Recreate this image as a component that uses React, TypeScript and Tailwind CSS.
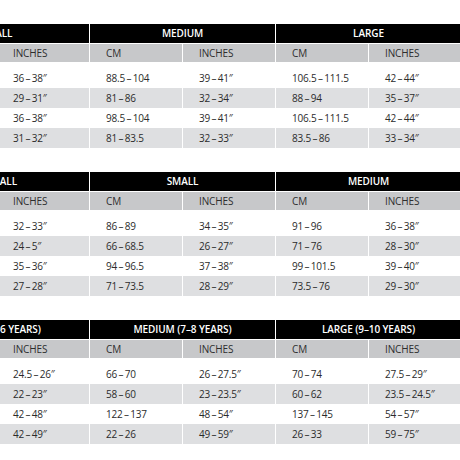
const font = { fontFamily: '"Open Sans", "Liberation Sans", sans-serif' };

type Table = {
  sizes: string[];
  rows: string[][];
};

// thin spaces around the dash, the print chart sets them tight
const d = (a: string, b: string, inch = false) =>
  `${a}\u2009–\u2009${b}${inch ? "″" : ""}`;

const tables: Table[] = [
  {
    sizes: ["SMALL", "MEDIUM", "LARGE"],
    rows: [
      [d("81", "86"), d("36", "38", true), d("88.5", "104"), d("39", "41", true), d("106.5", "111.5"), d("42", "44", true)],
      [d("74", "79"), d("29", "31", true), d("81", "86"), d("32", "34", true), d("88", "94"), d("35", "37", true)],
      [d("91.5", "96.5"), d("36", "38", true), d("98.5", "104"), d("39", "41", true), d("106.5", "111.5"), d("42", "44", true)],
      [d("79", "81"), d("31", "32", true), d("81", "83.5"), d("32", "33", true), d("83.5", "86"), d("33", "34", true)],
    ],
  },
  {
    sizes: ["X-SMALL", "SMALL", "MEDIUM"],
    rows: [
      [d("81", "84"), d("32", "33", true), d("86", "89"), d("34", "35", true), d("91", "96"), d("36", "38", true)],
      [d("61", "63.5"), d("24", "5", true), d("66", "68.5"), d("26", "27", true), d("71", "76"), d("28", "30", true)],
      [d("89", "91.5"), d("35", "36", true), d("94", "96.5"), d("37", "38", true), d("99", "101.5"), d("39", "40", true)],
      [d("68.5", "71"), d("27", "28", true), d("71", "73.5"), d("28", "29", true), d("73.5", "76"), d("29", "30", true)],
    ],
  },
  {
    sizes: ["SMALL (5–6 YEARS)", "MEDIUM (7–8 YEARS)", "LARGE (9–10 YEARS)"],
    rows: [
      [d("62", "66"), d("24.5", "26", true), d("66", "70"), d("26", "27.5", true), d("70", "74"), d("27.5", "29", true)],
      [d("56", "58"), d("22", "23", true), d("58", "60"), d("23", "23.5", true), d("60", "62"), d("23.5", "24.5", true)],
      [d("107", "122"), d("42", "48", true), d("122", "137"), d("48", "54", true), d("137", "145"), d("54", "57", true)],
      [d("18", "22"), d("42", "49", true), d("22", "26"), d("49", "59", true), d("26", "33"), d("59", "75", true)],
    ],
  },
];

const SizeTable = ({ table }: { table: Table }) => (
  <div className="flex flex-col">
    {/* size header */}
    <div className="grid grid-cols-[repeat(3,185px)] gap-x-px">
      {table.sizes.map((s) => (
        <div
          key={s}
          className="h-[19px] bg-black text-white text-[10px] font-semibold flex items-center justify-center tracking-[-0.01em]"
        >
          {s}
        </div>
      ))}
    </div>
    {/* unit header */}
    <div className="mt-px grid grid-cols-[repeat(6,92px)] gap-x-px">
      {[0, 1, 2, 3, 4, 5].map((i) => (
        <div
          key={i}
          className="h-[18px] bg-[#c7c8ca] text-[#2e2e2e] text-[10px] flex items-center pl-[16px] tracking-[-0.01em]"
        >
          {i % 2 === 0 ? "CM" : "INCHES"}
        </div>
      ))}
    </div>
    {/* values */}
    <div className="mt-[6px] flex flex-col">
      {table.rows.map((row, r) => (
        <div key={r} className="grid grid-cols-[repeat(6,92px)] gap-x-px">
          {row.map((v, i) => (
            <div
              key={i}
              className={`h-[20px] text-[#2b2b2b] text-[10px] flex items-center pl-[16px] tracking-[-0.02em] whitespace-nowrap ${
                r % 2 === 1 ? "bg-[#dedfe1]" : "bg-white"
              }`}
            >
              {v}
            </div>
          ))}
        </div>
      ))}
    </div>
  </div>
);

export default function App() {
  return (
    <div className="w-[460px] h-[460px] overflow-hidden bg-white" style={font}>
      {/* chart is cropped on the left, like the source image */}
      <div className="-ml-[96px] w-[560px] pt-[24px] flex flex-col gap-[24px]">
        {tables.map((t, i) => (
          <SizeTable key={i} table={t} />
        ))}
      </div>
    </div>
  );
}
